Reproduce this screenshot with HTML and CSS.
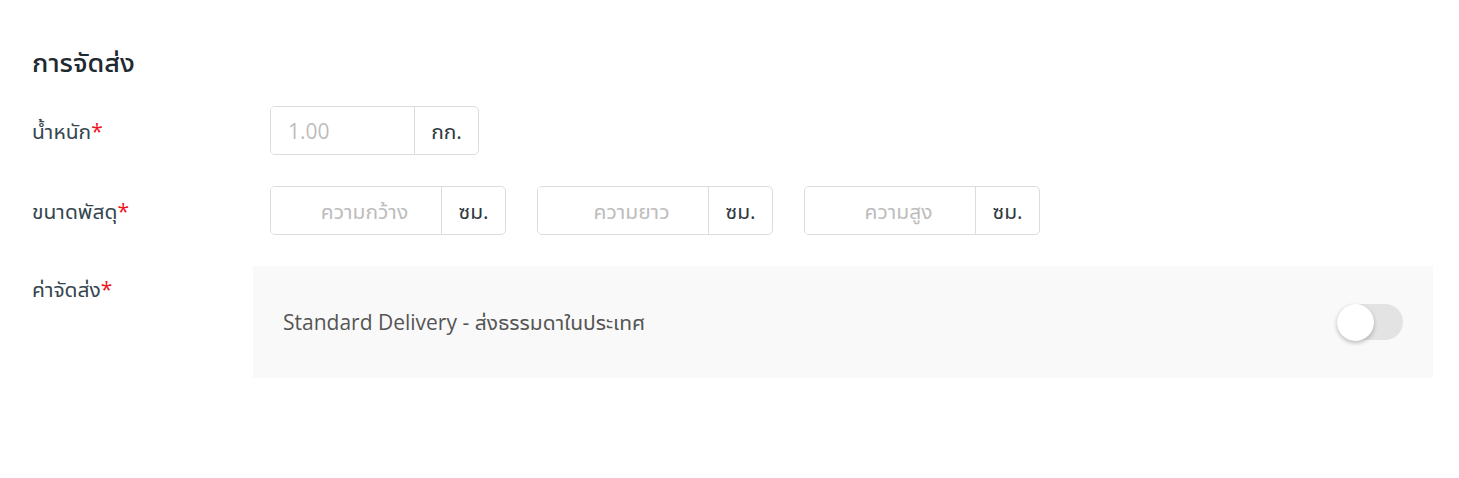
FILE: index.html
```html
<!DOCTYPE html>
<html lang="th">
<head>
<meta charset="utf-8">
<link rel="stylesheet" href="styles.css">
</head>
<body>
<section class="shipping">
  <h2 class="title">การจัดส่ง</h2>
  <div class="row">
    <div class="label">น้ำหนัก<span class="req">*</span></div>
    <div class="field">
      <div class="group g-weight">
        <input class="inp left" placeholder="1.00">
        <span class="addon">กก.</span>
      </div>
    </div>
  </div>
  <div class="row">
    <div class="label">ขนาดพัสดุ<span class="req">*</span></div>
    <div class="field dims">
      <div class="group g-dim">
        <input class="inp center" placeholder="ความกว้าง">
        <span class="addon">ซม.</span>
      </div>
      <div class="group g-dim">
        <input class="inp center" placeholder="ความยาว">
        <span class="addon">ซม.</span>
      </div>
      <div class="group g-dim">
        <input class="inp center" placeholder="ความสูง">
        <span class="addon">ซม.</span>
      </div>
    </div>
  </div>
  <div class="row row-ship">
    <div class="label">ค่าจัดส่ง<span class="req">*</span></div>
    <div class="panel">
      <span class="ship-name">Standard Delivery - ส่งธรรมดาในประเทศ</span>
      <span class="toggle"><span class="knob"></span></span>
    </div>
  </div>
</section>
</body>
</html>
```

FILE: styles.css
```css
* { box-sizing: border-box; }
body {
  margin: 0;
  background: #fff;
  font-family: "Open Sans", "Noto Sans Thai UI", "Noto Sans Thai", "Noto Sans", sans-serif;
  color: #37474f;
}
.shipping {
  padding: 44px 26px 0 32px;
}
.title {
  margin: 0 0 26px;
  font-size: 27px;
  line-height: 36px;
  font-weight: 500;
  color: #1f2a30;
}
.row {
  display: grid;
  grid-template-columns: 221px 1fr;
  align-items: center;
  margin-bottom: 31px;
}
.label {
  font-size: 21px;
  line-height: 28px;
  color: #36464f;
}
.req { color: #f0141e; }
.field {
  display: flex;
  gap: 31px;
  padding-left: 17px;
}
.group {
  display: flex;
  height: 49px;
  border: 1px solid #dcdcdc;
  border-radius: 5px;
  overflow: hidden;
}
.g-weight { width: 209px; }
.g-dim { width: 236px; }
.inp {
  flex: 1;
  min-width: 0;
  border: 0;
  outline: 0;
  font: inherit;
  font-size: 21px;
  color: #333;
  background: #fff;
  padding: 0 17px;
}
.inp::placeholder { color: #bdbdbd; }
.center { text-align: center; padding: 0 0 0 17px; }
.addon {
  width: 64px;
  display: flex;
  align-items: center;
  justify-content: center;
  border-left: 1px solid #dcdcdc;
  font-size: 21px;
  color: #2f3a40;
}
.row-ship { align-items: start; }
.row-ship .label { padding-top: 9px; }
.panel {
  display: flex;
  align-items: center;
  justify-content: space-between;
  height: 112px;
  background: #f9f9f9;
  padding: 0 30px 0 30px;
}
.ship-name {
  font-size: 21px;
  color: #555;
}
.toggle {
  display: flex;
  align-items: center;
  width: 66px;
  height: 36px;
  border-radius: 18px;
  background: #e3e3e3;
}
.knob {
  width: 37px;
  height: 37px;
  border-radius: 50%;
  background: #fff;
  box-shadow: 0 2px 4px rgba(0,0,0,0.25);
}
```
